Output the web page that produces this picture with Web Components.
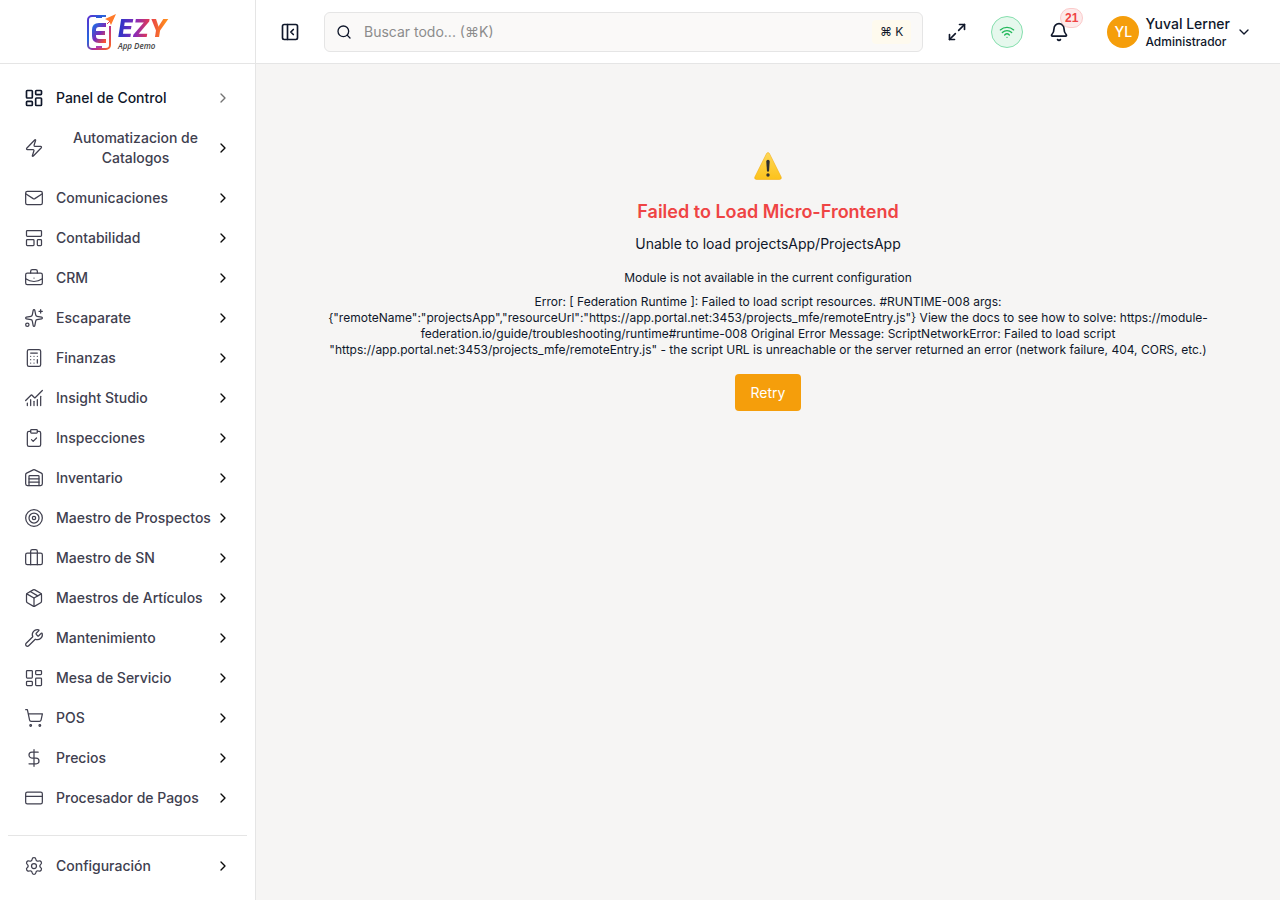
<!DOCTYPE html>
<html lang="es">
<head>
<meta charset="utf-8">
<meta name="viewport" content="width=device-width, initial-scale=1">
<title>EZY App Demo</title>
<style>
	body {
		margin: 0;
		font-family: Inter, "Liberation Sans", sans-serif;
		font-size: 14px;
		line-height: 20px;
		color: #0f172a;
		--color-border: #e5e5e5;
		--color-surface: #f6f5f4;
		--color-primary: #f59e0b;
		--color-danger: #ef4444;
		--color-nav: #40404f;
	}
</style>
</head>
<body>
<app-shell>
	<side-bar slot="sidebar">
		<app-logo slot="logo"></app-logo>
		<nav-item icon="dashboard" active>Panel de Control</nav-item>
		<nav-item icon="zap">Automatizacion de Catalogos</nav-item>
		<nav-item icon="mail">Comunicaciones</nav-item>
		<nav-item icon="template">Contabilidad</nav-item>
		<nav-item icon="business">CRM</nav-item>
		<nav-item icon="sparkles">Escaparate</nav-item>
		<nav-item icon="calculator">Finanzas</nav-item>
		<nav-item icon="chart">Insight Studio</nav-item>
		<nav-item icon="clipboard">Inspecciones</nav-item>
		<nav-item icon="warehouse">Inventario</nav-item>
		<nav-item icon="target">Maestro de Prospectos</nav-item>
		<nav-item icon="briefcase">Maestro de SN</nav-item>
		<nav-item icon="package">Maestros de Artículos</nav-item>
		<nav-item icon="wrench">Mantenimiento</nav-item>
		<nav-item icon="dashboard">Mesa de Servicio</nav-item>
		<nav-item icon="cart">POS</nav-item>
		<nav-item icon="dollar">Precios</nav-item>
		<nav-item icon="card">Procesador de Pagos</nav-item>
		<nav-item slot="footer" icon="settings">Configuración</nav-item>
	</side-bar>
	<top-bar slot="header">
		<search-box></search-box>
		<user-menu slot="user" initials="YL">
			<span slot="name">Yuval Lerner</span>
			<span slot="role">Administrador</span>
		</user-menu>
	</top-bar>
	<load-error>
		<span slot="title">Failed to Load Micro-Frontend</span>
		<span slot="message">Unable to load projectsApp/ProjectsApp</span>
		<span slot="reason">Module is not available in the current configuration</span>
		<span slot="details">Error: [ Federation Runtime ]: Failed to load script resources. #RUNTIME-008 args: {"remoteName":"projectsApp","resourceUrl":"https://app.portal.net:3453/projects_mfe/remoteEntry.js"} View the docs to see how to solve: https://module-federation.io/guide/troubleshooting/runtime#runtime-008 Original Error Message: ScriptNetworkError: Failed to load script "https://app.portal.net:3453/projects_mfe/remoteEntry.js" - the script URL is unreachable or the server returned an error (network failure, 404, CORS, etc.)</span>
	</load-error>
</app-shell>
<script>
const ICONS = {
	dashboard: `<rect width="7" height="9" x="3" y="3" rx="1"/><rect width="7" height="5" x="14" y="3" rx="1"/><rect width="7" height="9" x="14" y="12" rx="1"/><rect width="7" height="5" x="3" y="16" rx="1"/>`,
	zap: `<path d="M4 14a1 1 0 0 1-.78-1.63l9.9-10.2a.5.5 0 0 1 .86.46l-1.92 6.02A1 1 0 0 0 13 10h7a1 1 0 0 1 .78 1.63l-9.9 10.2a.5.5 0 0 1-.86-.46l1.92-6.02A1 1 0 0 0 11 14z"/>`,
	mail: `<path d="m22 7-8.991 5.727a2 2 0 0 1-2.009 0L2 7"/><rect x="2" y="4" width="20" height="16" rx="2"/>`,
	template: `<rect width="18" height="7" x="3" y="3" rx="1"/><rect width="9" height="7" x="3" y="14" rx="1"/><rect width="5" height="7" x="16" y="14" rx="1"/>`,
	business: `<path d="M12 12h.01"/><path d="M16 6V4a2 2 0 0 0-2-2h-4a2 2 0 0 0-2 2v2"/><path d="M22 13a18.15 18.15 0 0 1-20 0"/><rect width="20" height="14" x="2" y="6" rx="2"/>`,
	sparkles: `<path d="M11.017 2.814a1 1 0 0 1 1.966 0l1.051 5.558a2 2 0 0 0 1.594 1.594l5.558 1.051a1 1 0 0 1 0 1.966l-5.558 1.051a2 2 0 0 0-1.594 1.594l-1.051 5.558a1 1 0 0 1-1.966 0l-1.051-5.558a2 2 0 0 0-1.594-1.594l-5.558-1.051a1 1 0 0 1 0-1.966l5.558-1.051a2 2 0 0 0 1.594-1.594z"/><path d="M20 2v4"/><path d="M22 4h-4"/><circle cx="4" cy="20" r="2"/>`,
	calculator: `<rect width="16" height="20" x="4" y="2" rx="2"/><path d="M8 6h8"/><path d="M16 14v4"/><path d="M16 10h.01"/><path d="M12 10h.01"/><path d="M8 10h.01"/><path d="M12 14h.01"/><path d="M8 14h.01"/><path d="M12 18h.01"/><path d="M8 18h.01"/>`,
	chart: `<path d="M12 16v5"/><path d="M16 14v7"/><path d="M20 10v11"/><path d="m22 3-8.646 8.646a.5.5 0 0 1-.708 0L9.354 8.354a.5.5 0 0 0-.707 0L2 15"/><path d="M4 18v3"/><path d="M8 14v7"/>`,
	clipboard: `<rect width="8" height="4" x="8" y="2" rx="1"/><path d="M16 4h2a2 2 0 0 1 2 2v14a2 2 0 0 1-2 2H6a2 2 0 0 1-2-2V6a2 2 0 0 1 2-2h2"/><path d="m9 14 2 2 4-4"/>`,
	warehouse: `<path d="M18 21V10a1 1 0 0 0-1-1H7a1 1 0 0 0-1 1v11"/><path d="M22 19a2 2 0 0 1-2 2H4a2 2 0 0 1-2-2V8a2 2 0 0 1 1.132-1.803l7.95-3.974a2 2 0 0 1 1.837 0l7.948 3.974A2 2 0 0 1 22 8z"/><path d="M6 13h12"/><path d="M6 17h12"/>`,
	target: `<circle cx="12" cy="12" r="10"/><circle cx="12" cy="12" r="6"/><circle cx="12" cy="12" r="2"/>`,
	briefcase: `<path d="M16 20V4a2 2 0 0 0-2-2h-4a2 2 0 0 0-2 2v16"/><rect width="20" height="14" x="2" y="6" rx="2"/>`,
	package: `<path d="M11 21.73a2 2 0 0 0 2 0l7-4A2 2 0 0 0 21 16V8a2 2 0 0 0-1-1.73l-7-4a2 2 0 0 0-2 0l-7 4A2 2 0 0 0 3 8v8a2 2 0 0 0 1 1.73z"/><path d="M12 22V12"/><path d="M3.29 7 12 12l8.71-5"/><path d="m7.5 4.27 9 5.15"/>`,
	wrench: `<path d="M14.7 6.3a1 1 0 0 0 0 1.4l1.6 1.6a1 1 0 0 0 1.4 0l3.106-3.105c.32-.322.863-.22.983.218a6 6 0 0 1-8.259 7.057l-7.91 7.91a1 1 0 0 1-2.999-3l7.91-7.91a6 6 0 0 1 7.057-8.259c.438.12.54.662.219.984z"/>`,
	cart: `<circle cx="8" cy="21" r="1"/><circle cx="19" cy="21" r="1"/><path d="M2.05 2.05h2l2.66 12.42a2 2 0 0 0 2 1.58h9.78a2 2 0 0 0 1.95-1.57l1.65-7.43H5.12"/>`,
	dollar: `<path d="M12 2v20"/><path d="M17 5H9.5a3.5 3.5 0 0 0 0 7h5a3.5 3.5 0 0 1 0 7H6"/>`,
	card: `<rect width="20" height="14" x="2" y="5" rx="2"/><path d="M2 10h20"/>`,
	settings: `<path d="M9.671 4.136a2.34 2.34 0 0 1 4.659 0 2.34 2.34 0 0 0 3.319 1.915 2.34 2.34 0 0 1 2.33 4.033 2.34 2.34 0 0 0 0 3.831 2.34 2.34 0 0 1-2.33 4.033 2.34 2.34 0 0 0-3.319 1.915 2.34 2.34 0 0 1-4.659 0 2.34 2.34 0 0 0-3.32-1.915 2.34 2.34 0 0 1-2.33-4.033 2.34 2.34 0 0 0 0-3.831A2.34 2.34 0 0 1 6.35 6.051a2.34 2.34 0 0 0 3.319-1.915"/><circle cx="12" cy="12" r="3"/>`,
	panel: `<rect width="18" height="18" x="3" y="3" rx="2"/><path d="M9 3v18"/><path d="m16 15-3-3 3-3"/>`,
	search: `<circle cx="11" cy="11" r="8"/><path d="m21 21-4.3-4.3"/>`,
	expand: `<path d="M15 3h6v6"/><path d="m21 3-7 7"/><path d="m3 21 7-7"/><path d="M9 21H3v-6"/>`,
	wifi: `<path d="M12 20h.01"/><path d="M2 8.82a15 15 0 0 1 20 0"/><path d="M5 12.859a10 10 0 0 1 14 0"/><path d="M8.5 16.429a5 5 0 0 1 7 0"/>`,
	bell: `<path d="M10.268 21a2 2 0 0 0 3.464 0"/><path d="M3.262 15.326A1 1 0 0 0 4 17h16a1 1 0 0 0 .74-1.673C19.41 13.956 18 12.499 18 8A6 6 0 0 0 6 8c0 4.499-1.411 5.956-2.738 7.326"/>`,
	right: `<path d="m9 18 6-6-6-6"/>`,
	down: `<path d="m6 9 6 6 6-6"/>`
};

class BaseElement extends HTMLElement {
	constructor(){
		super();
		this.attachShadow({mode:"open"});
	}

	connectedCallback(){
		this.shadowRoot.innerHTML = this.render();
	}
}

class AppIcon extends BaseElement {
	render(){
		const size = this.getAttribute("size") || 20;
		const stroke = this.getAttribute("stroke") || 2;
		return `
			<style>
				:host {
					display: block;
					flex: none;
				}
				svg {
					display: block;
				}
			</style>
			<svg width="${size}" height="${size}" viewBox="0 0 24 24" fill="none" stroke="currentColor" stroke-width="${stroke}" stroke-linecap="round" stroke-linejoin="round" aria-hidden="true">${ICONS[this.getAttribute("name")]}</svg>
		`;
	}
}
window.customElements.define("app-icon",AppIcon);

class AppLogo extends BaseElement {
	render(){
		return `
			<style>
				:host {
					display: flex;
					align-items: center;
					gap: 2px;
				}
				svg {
					display: block;
				}
				.words {
					display: flex;
					flex-direction: column;
					padding-top: 4px;
				}
				.name {
					padding-right: 2px;
					font: italic 800 24px/24px Inter, sans-serif;
					background: linear-gradient(95deg, #2b35c8 5%, #8a2bb8 35%, #e5384f 60%, #ff8a1c 90%);
					background-clip: text;
					color: transparent;
				}
				.tag {
					font: italic 600 8px/10px "Open Sans", sans-serif;
					color: #444;
				}
			</style>
			<svg width="30" height="38" viewBox="0 0 30 38" fill="none" aria-hidden="true">
				<defs>
					<linearGradient id="frame" x1="0" y1="0" x2="1" y2="1">
						<stop offset="0" stop-color="#5a2fd0"/>
						<stop offset=".35" stop-color="#2467dd"/>
						<stop offset=".65" stop-color="#b52c92"/>
						<stop offset="1" stop-color="#ff6a1e"/>
					</linearGradient>
					<linearGradient id="letter" x1="0" y1="0" x2="1" y2="1">
						<stop offset="0" stop-color="#2368e2"/>
						<stop offset=".5" stop-color="#7a2cb8"/>
						<stop offset="1" stop-color="#ff5530"/>
					</linearGradient>
				</defs>
				<path d="M20 3H6a4 4 0 0 0-4 4v25a4 4 0 0 0 4 4h14a4 4 0 0 0 4-4V13" stroke="url(#frame)" stroke-width="2"/>
				<path d="M10 4h6" stroke="#2b57d6" stroke-width="2"/>
				<path d="M10 34h6" stroke="#b23eb0" stroke-width="2"/>
				<path d="M20 12h-7q-5 0-5 5v6q0 5 5 5h7M9 20h10" stroke="url(#letter)" stroke-width="4"/>
				<path d="m19 6 11-5-5 11-2-4z" fill="#ff7a2a"/>
				<path d="m21 11 3-3" stroke="#e83c55"/>
			</svg>
			<div class="words">
				<span class="name">EZY</span>
				<span class="tag">App Demo</span>
			</div>
		`;
	}
}
window.customElements.define("app-logo",AppLogo);

class NavItem extends BaseElement {
	render(){
		const active = this.hasAttribute("active");
		return `
			<style>
				:host {
					display: block;
				}
				button {
					display: flex;
					align-items: center;
					justify-content: space-between;
					width: 100%;
					padding: 8px 12px;
					border: 0;
					border-radius: 6px;
					background: none;
					font: inherit;
					font-weight: 500;
					color: var(--color-nav);
					cursor: pointer;
				}
				button:hover {
					background: var(--color-surface);
				}
				.label {
					display: flex;
					align-items: center;
					gap: 12px;
				}
				.arrow {
					color: #0a0a0a;
				}
				:host([active]) button {
					color: #0f172a;
				}
				:host([active]) .arrow {
					color: #737373;
				}
			</style>
			<button type="button">
				<span class="label">
					<app-icon name="${this.getAttribute("icon")}" stroke="${active ? 2 : 1.5}"></app-icon>
					<span><slot></slot></span>
				</span>
				<app-icon class="arrow" name="right" size="16"></app-icon>
			</button>
		`;
	}
}
window.customElements.define("nav-item",NavItem);

class SideBar extends BaseElement {
	render(){
		return `
			<style>
				:host {
					display: flex;
					flex-direction: column;
					height: 100%;
					box-sizing: border-box;
					border-right: 1px solid var(--color-border);
					background: #fff;
				}
				.brand {
					display: flex;
					align-items: center;
					justify-content: center;
					height: 64px;
					box-sizing: border-box;
					border-bottom: 1px solid var(--color-border);
				}
				nav {
					display: flex;
					flex-direction: column;
					flex: 1;
					gap: 4px;
					min-height: 0;
					overflow-y: auto;
					padding: 16px 12px;
					box-sizing: border-box;
				}
				.footer {
					margin: 0 8px;
					padding: 12px 4px 16px;
					border-top: 1px solid var(--color-border);
				}
			</style>
			<div class="brand"><slot name="logo"></slot></div>
			<nav><slot></slot></nav>
			<div class="footer"><slot name="footer"></slot></div>
		`;
	}
}
window.customElements.define("side-bar",SideBar);

class SearchBox extends BaseElement {
	render(){
		return `
			<style>
				:host {
					display: block;
				}
				label {
					display: flex;
					align-items: center;
					gap: 12px;
					height: 40px;
					box-sizing: border-box;
					padding: 0 11px;
					border: 1px solid var(--color-border);
					border-radius: 6px;
					background: #faf9f8;
				}
				input {
					flex: 1;
					min-width: 0;
					padding: 0;
					border: 0;
					outline: 0;
					background: none;
					font: inherit;
					color: inherit;
				}
				input::placeholder {
					color: #8c8c8c;
				}
				kbd {
					padding: 2px 8px;
					border-radius: 4px;
					background: #fefaee;
					font: inherit;
					font-size: 12px;
				}
			</style>
			<label>
				<app-icon name="search" size="16"></app-icon>
				<input type="search" placeholder="Buscar todo... (⌘K)" aria-label="Buscar todo">
				<kbd>⌘ K</kbd>
			</label>
		`;
	}
}
window.customElements.define("search-box",SearchBox);

class UserMenu extends BaseElement {
	render(){
		return `
			<style>
				:host {
					display: block;
				}
				button {
					display: flex;
					align-items: center;
					gap: 6px;
					padding: 0 12px;
					border: 0;
					background: none;
					font: inherit;
					font-weight: 500;
					color: inherit;
					text-align: left;
					cursor: pointer;
				}
				.avatar {
					display: grid;
					place-items: center;
					width: 32px;
					height: 32px;
					border-radius: 50%;
					background: var(--color-primary);
					color: #fff;
				}
				.who {
					display: flex;
					flex-direction: column;
				}
				.role {
					font-size: 12px;
					line-height: 16px;
				}
			</style>
			<button type="button">
				<span class="avatar">${this.getAttribute("initials")}</span>
				<span class="who">
					<slot name="name"></slot>
					<span class="role"><slot name="role"></slot></span>
				</span>
				<app-icon name="down" size="16"></app-icon>
			</button>
		`;
	}
}
window.customElements.define("user-menu",UserMenu);

class TopBar extends BaseElement {
	render(){
		return `
			<style>
				:host {
					display: flex;
					align-items: center;
					gap: 16px;
					height: 64px;
					box-sizing: border-box;
					padding: 0 16px;
					border-bottom: 1px solid var(--color-border);
					background: #fff;
				}
				.search {
					flex: 1;
				}
				button {
					display: grid;
					place-items: center;
					width: 36px;
					height: 36px;
					padding: 0;
					border: 0;
					border-radius: 6px;
					background: none;
					color: inherit;
					font: inherit;
					cursor: pointer;
				}
				.status {
					width: 32px;
					height: 32px;
					box-sizing: border-box;
					border: 1px solid #86dfae;
					border-radius: 50%;
					background: #e6f8ed;
					color: #22b85a;
				}
				.bell {
					position: relative;
					width: 40px;
				}
				.badge {
					position: absolute;
					top: -6px;
					right: -4px;
					box-sizing: border-box;
					padding: 0 4px;
					border: 1px solid #fbcaca;
					border-radius: 10px;
					background: #fdeaea;
					color: var(--color-danger);
					font: bold 12px/18px "Liberation Sans", sans-serif;
				}
			</style>
			<button type="button" aria-label="Contraer menú"><app-icon name="panel"></app-icon></button>
			<div class="search"><slot></slot></div>
			<button type="button" aria-label="Pantalla completa"><app-icon name="expand"></app-icon></button>
			<button type="button" class="status" aria-label="En línea"><app-icon name="wifi" size="16"></app-icon></button>
			<button type="button" class="bell" aria-label="Notificaciones"><app-icon name="bell"></app-icon><span class="badge">21</span></button>
			<slot name="user"></slot>
		`;
	}
}
window.customElements.define("top-bar",TopBar);

class LoadError extends BaseElement {
	render(){
		return `
			<style>
				:host {
					display: flex;
					flex-direction: column;
					align-items: center;
					padding: 88px 72px;
					text-align: center;
				}
				svg {
					display: block;
					margin-bottom: 18px;
				}
				h3, p {
					margin: 0 0 8px;
				}
				h3 {
					font-size: 18px;
					line-height: 28px;
					font-weight: 600;
					color: var(--color-danger);
				}
				.message {
					margin-bottom: 16px;
				}
				.small {
					font-size: 12px;
					line-height: 16px;
				}
				button {
					margin-top: 8px;
					padding: 8px 16px;
					border: 0;
					border-radius: 4px;
					background: var(--color-primary);
					color: #fff;
					font: inherit;
					line-height: 21px;
					cursor: pointer;
				}
			</style>
			<svg width="28" height="28" viewBox="0 0 28 28" role="img" aria-label="Advertencia">
				<defs>
					<linearGradient id="sign" x1="0" y1="0" x2="0" y2="1">
						<stop offset="0" stop-color="#fdd85a"/>
						<stop offset="1" stop-color="#fcc21b"/>
					</linearGradient>
				</defs>
				<path d="M12.6 1.4q1.4-2 2.8 0L27.2 25q.8 2.3-1.6 2.5H2.4Q0 27.300.8 25z" fill="url(#sign)" stroke="#f2a600" stroke-width=".5"/>
				<path d="M12.3 9.500q0-1.8 1.7-1.8t1.7 1.8l-.6 9q-.1 1.3-1.1 1.3t-1.1-1.3z" fill="#2f2f2f"/>
				<circle cx="14" cy="23" r="1.7" fill="#2f2f2f"/>
			</svg>
			<h3><slot name="title"></slot></h3>
			<p class="message"><slot name="message"></slot></p>
			<p class="small"><slot name="reason"></slot></p>
			<p class="small"><slot name="details"></slot></p>
			<button type="button">Retry</button>
		`;
	}
}
window.customElements.define("load-error",LoadError);

class AppShell extends BaseElement {
	render(){
		return `
			<style>
				:host {
					display: grid;
					grid-template-columns: 256px 1fr;
					height: 100vh;
				}
				aside {
					min-height: 0;
				}
				.content {
					display: flex;
					flex-direction: column;
					min-width: 0;
				}
				main {
					flex: 1;
					background: var(--color-surface);
				}
			</style>
			<aside><slot name="sidebar"></slot></aside>
			<div class="content">
				<slot name="header"></slot>
				<main><slot></slot></main>
			</div>
		`;
	}
}
window.customElements.define("app-shell",AppShell);
</script>
</body>
</html>
